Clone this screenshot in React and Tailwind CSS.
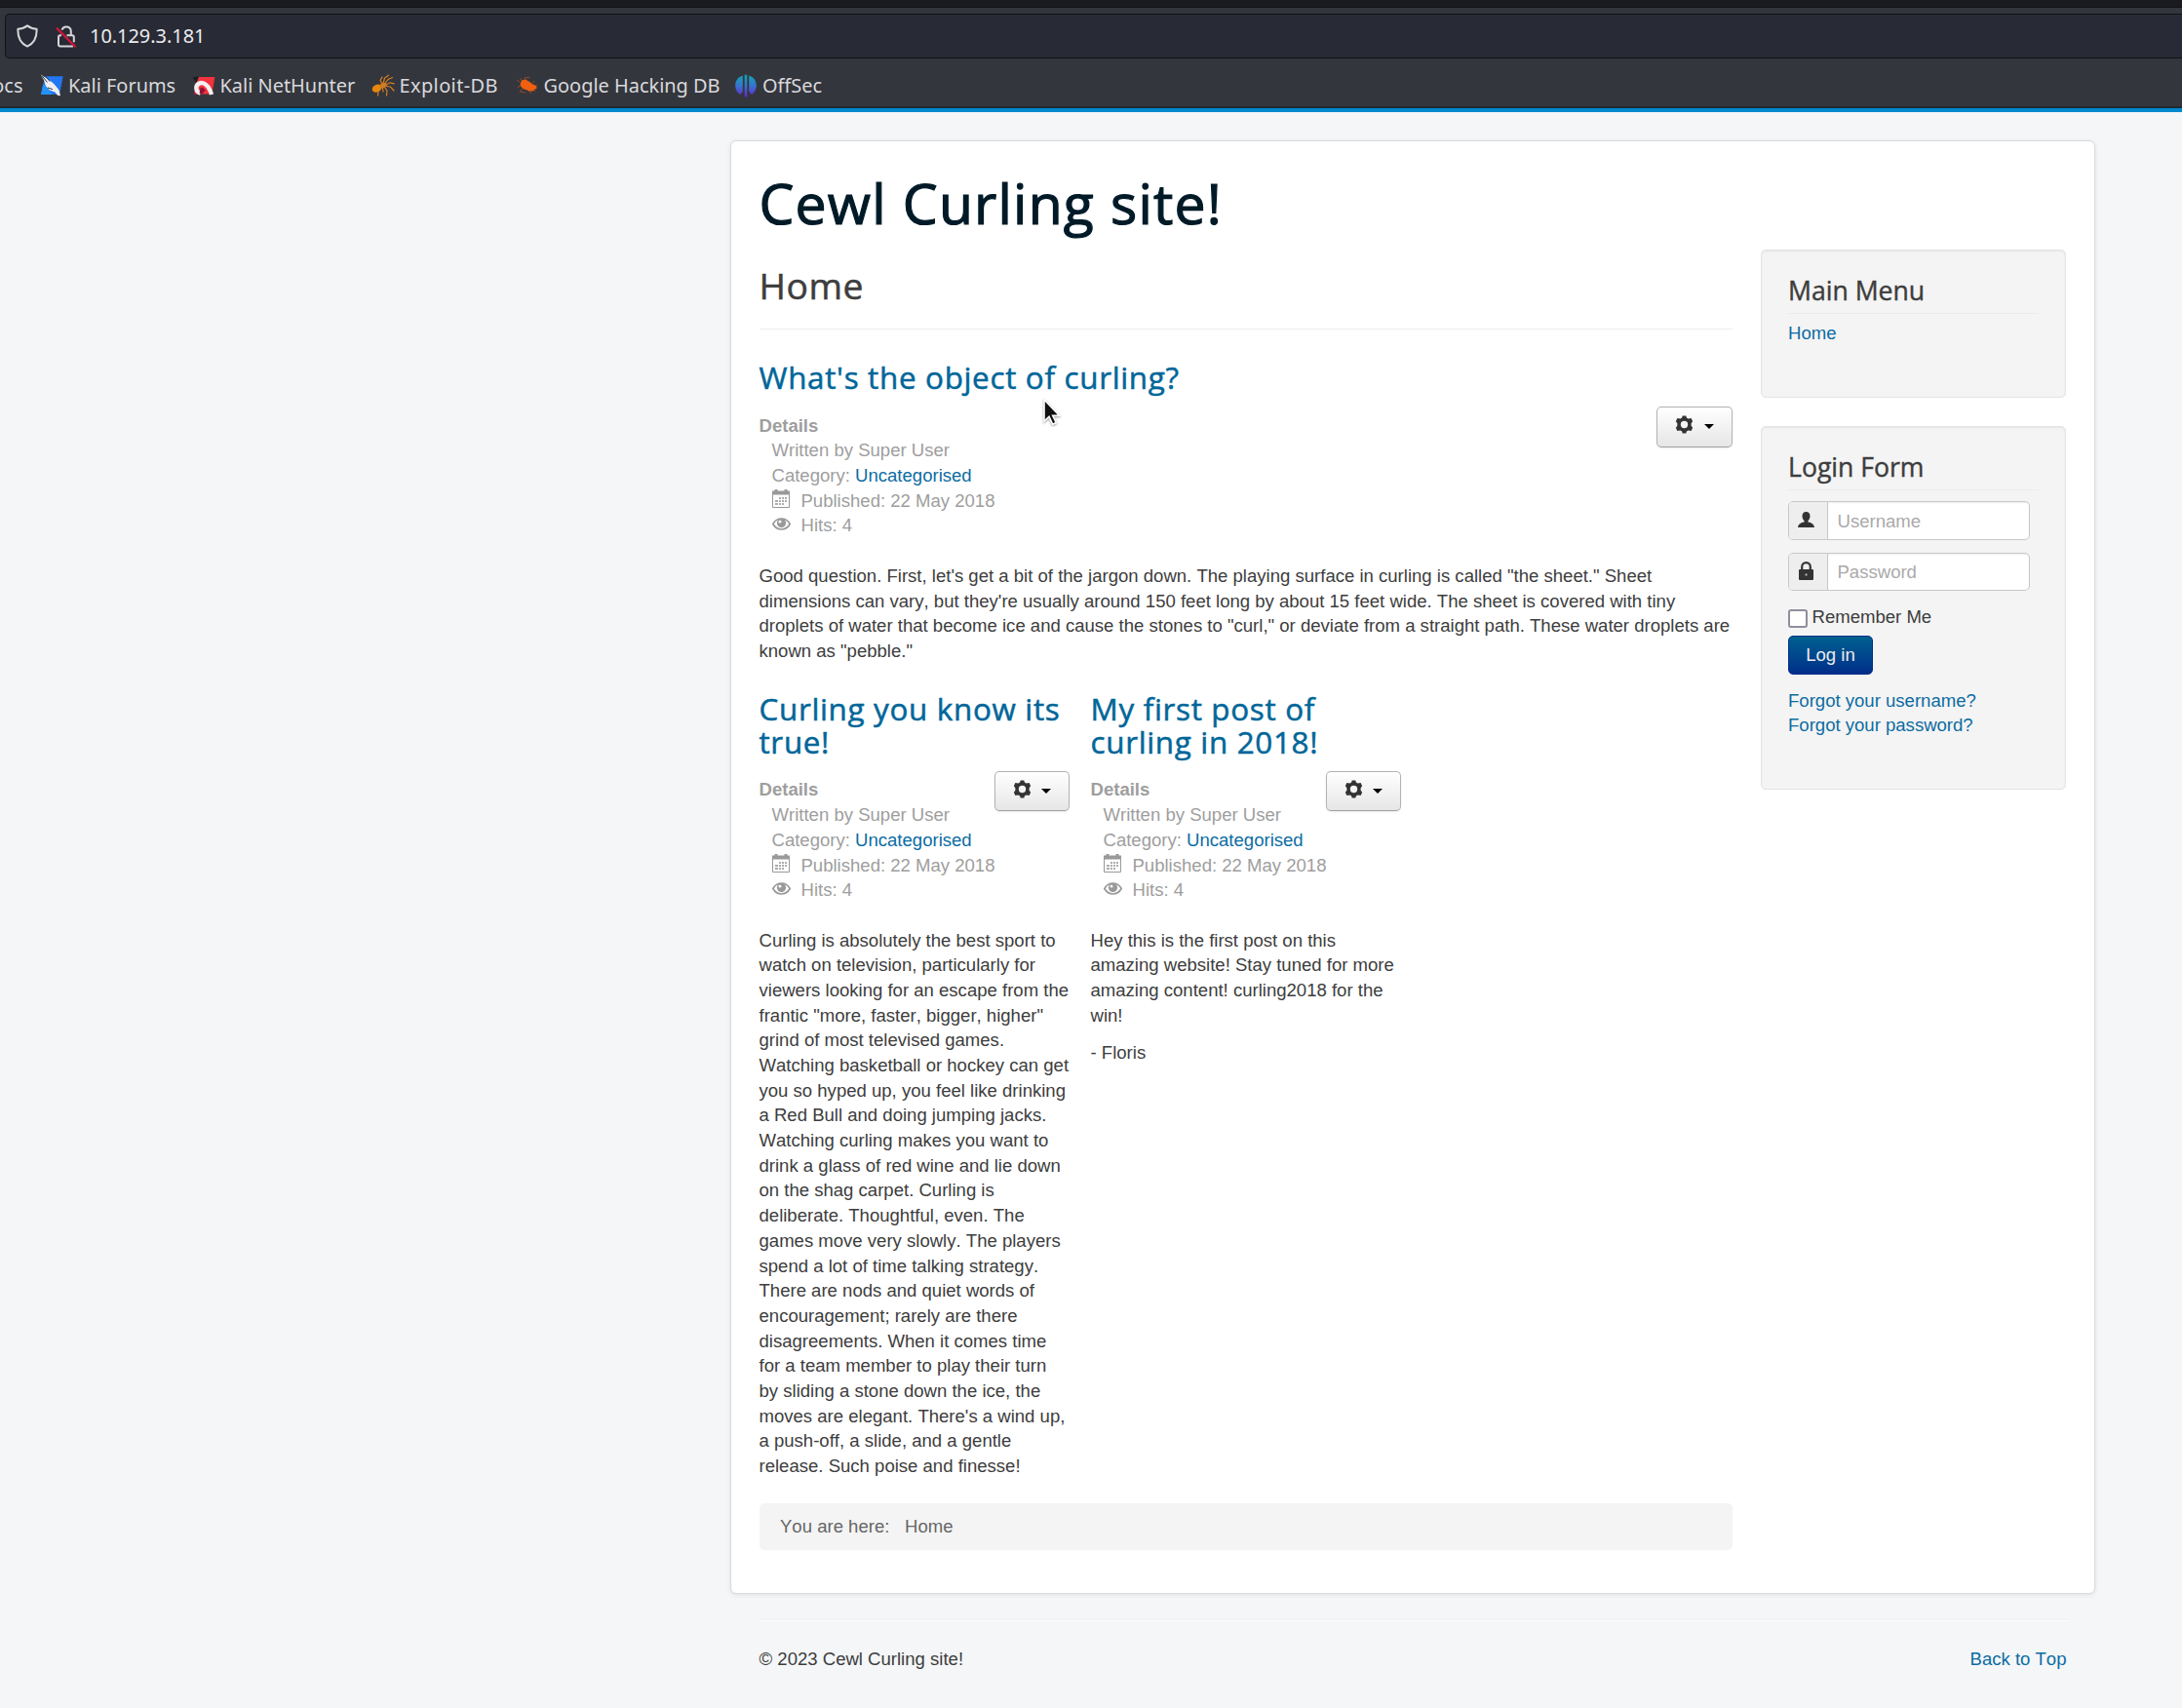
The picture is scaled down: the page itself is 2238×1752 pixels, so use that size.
const LINK = "text-[#0c6ca2]";

function ShieldIcon() {
  return (
    <svg className="w-[22px] h-6 shrink-0" viewBox="0 0 22 24" fill="none" stroke="#d6d6da" strokeWidth="2" strokeLinejoin="round">
      <path d="M11 1.4 C8.2 3.6 5 4.6 1.4 4.8 C1 13.5 4.6 19.6 11 22.6 C17.4 19.6 21 13.5 20.6 4.8 C17 4.6 13.8 3.6 11 1.4Z" />
    </svg>
  );
}

function InsecureLockIcon() {
  return (
    <svg className="w-[22px] h-6 shrink-0" viewBox="0 0 22 24" fill="none">
      <path d="M6.500 5.600a4.800 4.800 0 0 1 9.300 1.400v4" stroke="#d6d6da" strokeWidth="2" />
      <path d="M6 11.300H4.900a1.900 1.900 0 0 0-1.900 1.900v7.400a1.900 1.900 0 0 0 1.900 1.900h13M11.500 11.300h5.400a1.900 1.900 0 0 1 1.900 1.900v5" stroke="#d6d6da" strokeWidth="2" />
      <path d="M1 3.600 20.600 23.200" stroke="#d0163c" strokeWidth="2.200" />
    </svg>
  );
}

function ForumsIcon() {
  return (
    <svg className="w-6 h-6 shrink-0" viewBox="0 0 24 24">
      <path d="M5 2.200h18.600l-3.400 18.600H1.200z" fill="#2277f5" />
      <path d="M1 21 3.200 10l10 11z" fill="#2493f8" />
      <path d="M.8.6 7 4.400l4.400 3.200 3.600 3.200 4.400 5.400 1.600 6-3-.4-2.600-3.400-5.600-1.800-4-4.600-1.600-5.400z" fill="#f1efed" />
      <path d="m2 1.600 5.400 6.800M4.600 1l5.600 6.600M8 14l5 1.600" stroke="#333842" strokeWidth="1" />
    </svg>
  );
}

function NetHunterIcon() {
  return (
    <svg className="w-6 h-6 shrink-0" viewBox="0 0 24 24">
      <path d="M5 3h18.400l-3 17.600H2.400z" fill="#f2323c" />
      <path d="M1.600 20.600 3 14l8 6.600z" fill="#c01342" />
      <path d="M.6 3.200l6.400-.6-2.600 7z" fill="#1d1f25" />
      <path d="M8.500 19.500C3.500 18.500 3 12 7 9.800c5-2.600 10.500 2.200 13 11.200" fill="none" stroke="#f5f0f0" strokeWidth="4.400" />
      <path d="M8.500 14.500c1-1.500 3.500-1 5 2.500l-3.500 3.600-2.500-1.200z" fill="#8e1238" />
    </svg>
  );
}

function ExploitIcon() {
  return (
    <svg className="w-6 h-6 shrink-0" viewBox="0 0 24 24" fill="none" stroke="#d8801f" strokeWidth="1.200" strokeLinecap="round">
      <path d="M12 10 13.500 4 17.500 1.200M14 9.500 17 5.500 21.500 3.500M15 11l4-2.200 4.200 1M15 12.500l4.500.5 3.500 4M13.500 13.500l2.500 3.500-.5 5M11 10 9 6.500 11 3M9 14.500l-2 3-.5 4.500M11.500 14l.5 4" />
      <ellipse cx="5.600" cy="14.600" rx="5" ry="3.800" transform="rotate(-24 5.600 14.600)" fill="#e8860f" stroke="none" />
      <ellipse cx="12" cy="11.600" rx="3.800" ry="2.600" transform="rotate(-20 12 11.600)" fill="#d07a24" stroke="none" />
    </svg>
  );
}

function HackingIcon() {
  return (
    <svg className="w-6 h-6 shrink-0" viewBox="0 0 24 24" fill="none" stroke="#a04a20" strokeWidth="0.900" strokeLinecap="round">
      <path d="M4 8 1.500 6.500M6 6.500 5 4.500M10 6 9 3.800l5-.3M4.500 12 2 13.500M7 15l-3 3 6 1M13 17l3 3M17 9l2-1.500M20 12l2-.5M18 15l2 2.500" />
      <path d="M4.500 10.500 6 6.500l4-1 5 3c1 1.200 2 2 4 2.600 1.800.8 3 2.600 2.600 3.600-1.600.8-3.200.8-3.400 2.600-3 .8-5.600-.2-8-1.300-3-1-5.200-2.600-5.700-5.500z" fill="#f0600f" stroke="none" />
    </svg>
  );
}

function OffSecIcon() {
  return (
    <svg className="w-6 h-6 shrink-0" viewBox="0 0 24 24">
      <defs>
        <linearGradient id="offsec" x1="0" y1="0" x2="0" y2="1">
          <stop offset="0" stopColor="#12a5b4" />
          <stop offset="0.500" stopColor="#3674cf" />
          <stop offset="1" stopColor="#6a22cf" />
        </linearGradient>
      </defs>
      <path
        fill="url(#offsec)"
        d="M8.800 1.600V18l-2.800 3C3 19 1.200 15.600 1.200 12 1.200 7 4.200 3 8.800 1.600zM15.200 1.600V18l2.800 3c3-2 4.800-5.400 4.800-9 0-5-3-9-7.600-10.400zM10.700.8h2.600V23.600h-2.600z"
      />
    </svg>
  );
}

function GearIcon() {
  return (
    <svg className="w-[19px] h-[19px]" viewBox="0 0 20 20" fill="#333" fillRule="evenodd">
      <path d="M8.100.5h3.800l.6 2.200 1.800 1 3.200-.5 1.600 3.400-1.600 2v2.800l1.600 2-1.600 3.400-3.200-.5-1.800 1-.6 2.200H8.100l-.6-2.200-1.800-1-3.200.5L.9 13.400l1.600-2V8.600l-1.600-2 1.600-3.400 3.200.5 1.800-1zM10 6.100a3.900 3.900 0 1 0 0 7.800 3.900 3.900 0 0 0 0-7.800z" />
    </svg>
  );
}

function CalendarIcon() {
  return (
    <svg className="w-[18px] h-[19px]" viewBox="0 0 18 19" fill="#999">
      <path d="M0 1.500h2.500V0h3v1.500h7V0h3v1.500H18V5H0z" />
      <path d="M.5 5h17v13.500H.5z" fill="none" stroke="#999" />
      <path d="M7 8h2v2H7zM10 8h2v2h-2zM13 8h2v2h-2zM7 11h2v2H7zM10 11h2v2h-2zM13 11h2v2h-2zM3 11h3v2H3zM3 14h3v2H3zM7 14h2v2H7zM10 14h2v2h-2z" opacity="0.800" />
    </svg>
  );
}

function EyeIcon() {
  return (
    <svg className="w-[19px] h-[13px]" viewBox="0 0 19 13">
      <path d="M.8 6.500C3 2.700 6 1 9.500 1s6.500 1.700 8.700 5.500C16 10.300 13 12 9.500 12S3 10.300.8 6.500z" fill="none" stroke="#999" strokeWidth="1.700" />
      <circle cx="9.500" cy="5.600" r="4.600" fill="#999" />
      <circle cx="8" cy="4.200" r="1.400" fill="#fff" />
    </svg>
  );
}

function UserIcon() {
  return (
    <svg className="w-[17px] h-4" viewBox="0 0 17 16" fill="#333">
      <path d="M8.500 0c2.400 0 4 1.500 4 4.200 0 2-.8 3.800-2 4.800v1.500c3.200.5 6 2 6.500 5.500H0c.5-3.500 3.300-5 6.500-5.500V9c-1.200-1-2-2.800-2-4.800C4.500 1.500 6.100 0 8.500 0z" />
    </svg>
  );
}

function LockIcon() {
  return (
    <svg className="w-[15px] h-[19px]" viewBox="0 0 15 19">
      <path d="M3.200 9V5.400a4.300 4.300 0 0 1 8.600 0V9" fill="none" stroke="#333" strokeWidth="2.200" />
      <rect y="8" width="15" height="11" rx="1" fill="#333" />
      <rect x="6.500" y="12.500" width="2" height="2" fill="#bbb" />
    </svg>
  );
}

function Bookmark({ icon, label, className }) {
  return (
    <div className={`flex items-center shrink-0 ${className}`}>
      {icon}
      <span className="ml-[5px] whitespace-nowrap">{label}</span>
    </div>
  );
}

function Browser() {
  return (
    <header className="h-[111px] bg-[#34363d] border-b-2 border-[#1e2a33] overflow-hidden font-['Noto_Sans',sans-serif] text-[#d9d9dc]">
      <div className="h-2 bg-[#1a1b20] border-b border-[#121317]" />
      <div className="mt-[6px] ml-[5px] h-[46px] rounded-l-[5px] border border-r-0 border-[#111216] bg-[#282a35] flex items-center pl-[11px]">
        <ShieldIcon />
        <span className="w-[18px]" />
        <InsecureLockIcon />
        <span className="ml-[13px] text-[19.900px] text-[#ececee]">10.129.3.181</span>
      </div>
      <div className="h-[50px] pt-[6px] flex items-center text-[19.950px]">
        <span className="-ml-[11.500px] w-[35px] shrink-0 text-right">ocs</span>
        <Bookmark className="ml-[17.500px] w-[138.500px]" icon={<ForumsIcon />} label="Kali Forums" />
        <Bookmark className="ml-[17px] w-[167px]" icon={<NetHunterIcon />} label="Kali NetHunter" />
        <Bookmark className="ml-[17px] w-[131px] tracking-[0.400px]" icon={<ExploitIcon />} label="Exploit-DB" />
        <Bookmark className="ml-[17px] w-[208px]" icon={<HackingIcon />} label="Google Hacking DB" />
        <Bookmark className="ml-[16.500px]" icon={<OffSecIcon />} label="OffSec" />
      </div>
    </header>
  );
}

function GearButton() {
  return (
    <button className="absolute right-0 -top-[6.500px] w-[77.500px] h-[41.500px] rounded-[5px] border border-[#b3b3b3] border-b-[#a2a2a2] bg-linear-to-b from-white to-[#e6e6e6] shadow-[0_1px_2px_rgba(0,0,0,0.08)] flex items-center pl-[18px] pb-1">
      <GearIcon />
      <span className="ml-[10.500px] mt-[4px] border-x-[5.500px] border-x-transparent border-t-[5.500px] border-t-black" />
    </button>
  );
}

function Details() {
  return (
    <div className="relative text-[#9e9e9e]">
      <GearButton />
      <div className="font-bold">Details</div>
      <div className="pl-[13px]">
        <div>Written by Super User</div>
        <div>
          Category: <a className={LINK}>Uncategorised</a>
        </div>
        <div className="flex">
          <span className="w-[30px] pt-px">
            <CalendarIcon />
          </span>
          Published: 22 May 2018
        </div>
        <div className="flex">
          <span className="w-[30px] pt-[5px]">
            <EyeIcon />
          </span>
          Hits: 4
        </div>
      </div>
    </div>
  );
}

function Lines({ lines }) {
  return (
    <p>
      {lines.map((line) => (
        <span key={line} className="block whitespace-nowrap">{line}</span>
      ))}
    </p>
  );
}

function Post({ title, paragraphs, className }) {
  return (
    <article className={className}>
      <h2 className="font-['Open_Sans',sans-serif] text-[31.400px] leading-[34.200px] tracking-[0.680px] [-webkit-text-stroke:0.500px] text-[#006699]">
        {title.map((line) => (
          <span key={line} className="block whitespace-nowrap">{line}</span>
        ))}
      </h2>
      <div className="mt-[19px]">
        <Details />
      </div>
      <div className="mt-[25.700px] flex flex-col gap-[12.800px]">
        {paragraphs.map((lines) => (
          <Lines key={lines[0]} lines={lines} />
        ))}
      </div>
    </article>
  );
}

const FEATURED = [
  'Good question. First, let\'s get a bit of the jargon down. The playing surface in curling is called "the sheet." Sheet',
  "dimensions can vary, but they're usually around 150 feet long by about 15 feet wide. The sheet is covered with tiny",
  'droplets of water that become ice and cause the stones to "curl," or deviate from a straight path. These water droplets are',
  'known as "pebble."',
];

const CURLING = [
  "Curling is absolutely the best sport to",
  "watch on television, particularly for",
  "viewers looking for an escape from the",
  'frantic "more, faster, bigger, higher"',
  "grind of most televised games.",
  "Watching basketball or hockey can get",
  "you so hyped up, you feel like drinking",
  "a Red Bull and doing jumping jacks.",
  "Watching curling makes you want to",
  "drink a glass of red wine and lie down",
  "on the shag carpet. Curling is",
  "deliberate. Thoughtful, even. The",
  "games move very slowly. The players",
  "spend a lot of time talking strategy.",
  "There are nods and quiet words of",
  "encouragement; rarely are there",
  "disagreements. When it comes time",
  "for a team member to play their turn",
  "by sliding a stone down the ice, the",
  "moves are elegant. There's a wind up,",
  "a push-off, a slide, and a gentle",
  "release. Such poise and finesse!",
];

const FIRST_POST = [
  "Hey this is the first post on this",
  "amazing website! Stay tuned for more",
  "amazing content! curling2018 for the",
  "win!",
];

function Well({ title, className, children }) {
  return (
    <section className={`rounded-[5px] border border-[#e3e3e3] bg-[#f4f4f4] shadow-[inset_0_1px_2px_rgba(0,0,0,0.06)] px-[27.500px] pt-[24.500px] ${className}`}>
      <h3 className="w-[257px] h-[40.500px] border-b border-[#ebebeb] font-['Open_Sans',sans-serif] text-[26.600px] leading-[34px] [-webkit-text-stroke:0.400px]">{title}</h3>
      {children}
    </section>
  );
}

function Field({ icon, placeholder, className }) {
  return (
    <div className={`flex w-[248px] h-[39.500px] rounded-[5px] border border-[#c8c8c8] overflow-hidden bg-white ${className}`}>
      <span className="w-[40px] shrink-0 border-r border-[#c8c8c8] bg-[#eee] flex items-center justify-center pr-[4px] pb-[2px]">{icon}</span>
      <span className="flex-1 pl-[9.500px] pt-[6.300px] text-[#aaa] shadow-[inset_0_1px_2px_rgba(0,0,0,0.07)]">{placeholder}</span>
    </div>
  );
}

function Pointer() {
  return (
    <svg className="absolute left-[1069px] top-[408px] w-[22px] h-[30px]" viewBox="0 0 22 30">
      <path d="M2 2v22l5-4.600 3.600 7.800 3.600-1.700-3.500-7.300h6.800z" fill="#111" stroke="#fff" strokeWidth="1.600" className="drop-shadow-[0_1px_1px_rgba(0,0,0,0.4)]" />
    </svg>
  );
}

export default function App() {
  return (
    <div className="relative w-[2238px] h-[1752px] overflow-hidden bg-[#f4f6f8] font-['Liberation_Sans',Arial,sans-serif] [font-kerning:none] text-[18.560px] leading-[25.690px] text-[#3d3d3d]">
      <Browser />
      <div className="h-[4.300px] bg-[#0088cc]" />
      <div className="ml-[749px] mt-[28.700px] w-[1399.500px] h-[1491px] rounded-[6px] border border-[#d9dadc] bg-white shadow-[0_1px_5px_rgba(0,0,0,0.09)] px-[28.500px] pt-[33px]">
        <h1 className="h-[60px] leading-[60px] font-['Open_Sans',sans-serif] text-[57px] tracking-[1.200px] [-webkit-text-stroke:1.200px] text-[#001a27] whitespace-nowrap">Cewl Curling site!</h1>
        <div className="mt-[18px] flex justify-between">
          <main className="w-[998px]">
            <div className="h-[82.500px] pt-[10.500px] border-b border-[#eee]">
              <h2 className="font-['Open_Sans',sans-serif] text-[37.300px] leading-[53px] tracking-[0.500px] [-webkit-text-stroke:0.500px]">Home</h2>
            </div>
            <Post className="mt-[32px]" title={["What's the object of curling?"]} paragraphs={[FEATURED]} />
            <div className="mt-[29.500px] flex gap-[21.500px]">
              <Post className="w-[318.500px]" title={["Curling you know its", "true!"]} paragraphs={[CURLING]} />
              <Post className="w-[318.500px]" title={["My first post of", "curling in 2018!"]} paragraphs={[FIRST_POST, ["- Floris"]]} />
            </div>
            <nav className="mt-[25px] h-12 rounded-[5px] bg-[#f4f4f4] flex items-center pl-[21.500px] text-[#666]">
              <span className="w-[128px]">You are here:</span>
              <span>Home</span>
            </nav>
          </main>
          <aside className="w-[313.500px]">
            <Well title="Main Menu" className="h-[152.500px]">
              <a className={`block mt-[7.500px] ${LINK}`}>Home</a>
            </Well>
            <Well title="Login Form" className="mt-[28.500px] h-[373.500px]">
              <Field className="mt-[11.500px]" icon={<UserIcon />} placeholder="Username" />
              <Field className="mt-[13px]" icon={<LockIcon />} placeholder="Password" />
              <label className="mt-[13.500px] flex">
                <span className="mt-[5px] mr-[5px] w-[19.500px] h-[19.500px] rounded-[3px] border-2 border-[#8f8f9d] bg-white" />
                Remember Me
              </label>
              <button className="mt-[6.500px] block w-[87px] h-[39.500px] rounded-[5px] border border-[#003088] bg-linear-to-b from-[#00608f] to-[#002c8a] text-[#ececec]">Log in</button>
              <div className={`mt-[14px] ${LINK}`}>
                <a className="block">Forgot your username?</a>
                <a className="block">Forgot your password?</a>
              </div>
            </Well>
          </aside>
        </div>
      </div>
      <footer className="ml-[778.500px] mt-[26.500px] w-[1341px] border-t border-[#eee]">
        <div className="border-t border-white pt-[26px] flex justify-between">
          <span>© 2023 Cewl Curling site!</span>
          <a className={LINK}>Back to Top</a>
        </div>
      </footer>
      <Pointer />
    </div>
  );
}
